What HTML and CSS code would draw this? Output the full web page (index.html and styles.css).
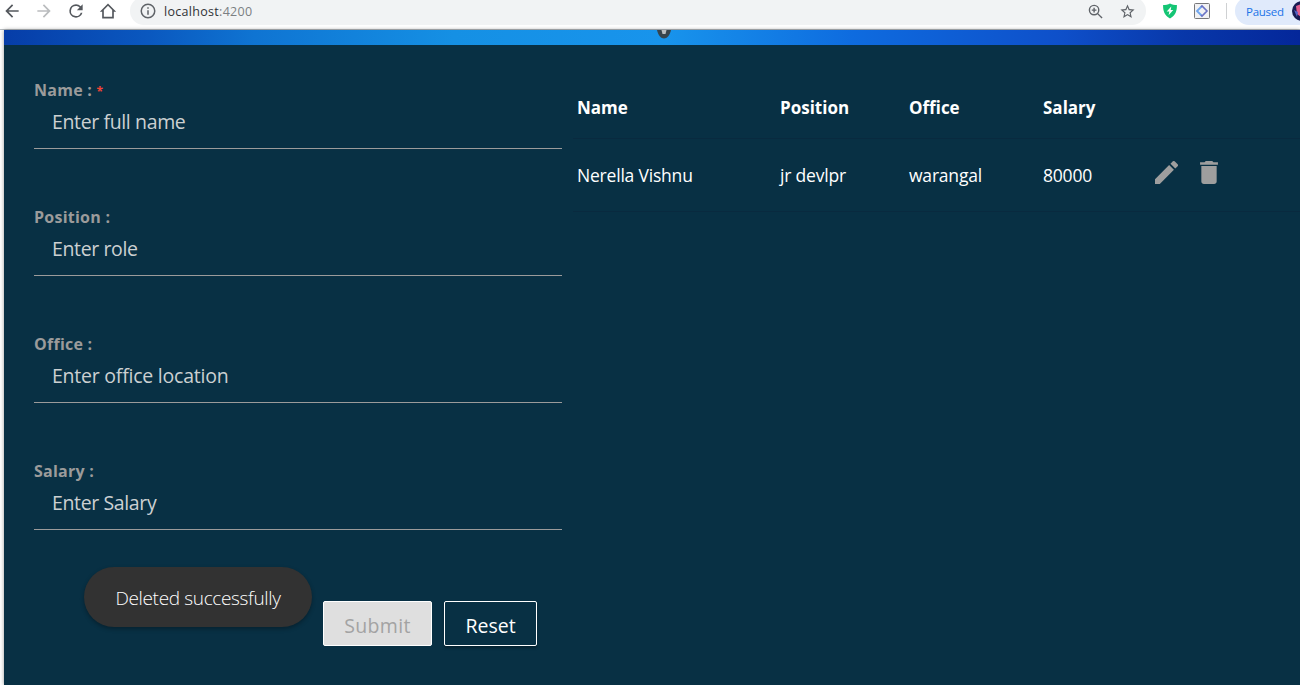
FILE: index.html
```html
<!DOCTYPE html>
<html lang="en">
<head>
<meta charset="utf-8">
<title>Employees</title>
<link rel="stylesheet" href="styles.css">
</head>
<body>
<header class="toolbar">
  <nav class="nav">
    <svg class="icon" viewBox="0 0 24 24"><path d="M20 11H7.83l5.59-5.59L12 4l-8 8 8 8 1.41-1.41L7.83 13H20z"/></svg>
    <svg class="icon icon-off" viewBox="0 0 24 24"><path d="M12 4l-1.41 1.41L16.17 11H4v2h12.17l-5.58 5.59L12 20l8-8z"/></svg>
    <svg class="icon" viewBox="0 0 24 24"><path d="M17.65 6.35A7.96 7.96 0 0 0 12 4a8 8 0 1 0 7.73 10h-2.08A6 6 0 1 1 12 6c1.66 0 3.14.69 4.22 1.78L13 11h7V4z"/></svg>
    <svg class="icon" viewBox="0 0 24 24"><path d="M12 3L2.200 13H5v8h14v-8h2.800zM7 19v-8.200l5-5 5 5V19z" fill-rule="evenodd"/></svg>
  </nav>
  <div class="address">
    <svg class="info" viewBox="0 0 24 24"><path d="M11 17h2v-6h-2zm1-15a10 10 0 1 0 0 20 10 10 0 0 0 0-20zm0 18a8 8 0 1 1 0-16 8 8 0 0 1 0 16zM11 9h2V7h-2z"/></svg>
    <span class="host">localhost</span><span class="port">:4200</span>
    <svg class="magnify" viewBox="0 0 16 16"><g fill="none" stroke="#5f6368" stroke-width="1.500"><circle cx="6.500" cy="6.500" r="5"/><path d="M10 10l5 5M4 6.500h5M6.500 4v5"/></g></svg>
    <svg class="star" viewBox="0 0 24 24"><path d="M22 9.240l-7.190-.62L12 2 9.190 8.630 2 9.240l5.460 4.730L5.820 21 12 17.270 18.180 21l-1.630-7.030zM12 15.400l-3.760 2.270 1-4.280-3.320-2.880 4.380-.38L12 6.100l1.710 4.040 4.380.38-3.320 2.880 1 4.280z"/></svg>
  </div>
  <svg class="shield" viewBox="0 0 16 16"><path d="M8 .4C10 1.600 12.500 2 14.900 2c.2 6-1.500 10.500-6.900 13.600C2.600 12.500.9 8 1.100 2 3.500 2 6 1.600 8 .4z" fill="#14c574"/><path d="M9.300 3.500L4.700 8.600h2.600l-.7 3.700 4.700-5.200H8.700z" fill="#fff"/></svg>
  <svg class="extension" viewBox="0 0 16 16"><rect x=".5" y=".5" width="15" height="15" rx="1" fill="#f1f1f3" stroke="#77777a"/><path d="M8 3L3 8l5 5" fill="none" stroke="#6fa5ee" stroke-width="1.800"/><path d="M7 4l1-1 5 5-5 5-1-1" fill="none" stroke="#6b72c4" stroke-width="1.600"/></svg>
  <span class="divider"></span>
  <div class="profile"><span>Paused</span>
    <svg class="avatar" viewBox="0 0 20 20"><circle cx="10" cy="10" r="10" fill="#171b53"/><path d="M4 5l5-2v13l-4-3z" fill="#e05c8c"/><path d="M2 9l4 2-1 5z" fill="#5262c4"/></svg>
  </div>
</header>
<main class="page">
  <div class="banner">
    <svg class="mark" viewBox="0 0 16 10"><path d="M1 0h14c-1 5-4 8.500-7 8.500S2 5 1 0z" fill="#37444d"/><path d="M5.500 0h5L9.500 4h-3z" fill="#b9bdc0"/></svg>
  </div>
  <div class="content">
    <form class="form">
      <div class="field"><label class="label">Name : <span class="required">*</span></label><input class="input" placeholder="Enter full name"></div>
      <div class="field"><label class="label">Position :</label><input class="input" placeholder="Enter role"></div>
      <div class="field"><label class="label">Office :</label><input class="input office" placeholder="Enter office location"></div>
      <div class="field"><label class="label">Salary :</label><input class="input" placeholder="Enter Salary"></div>
      <div class="actions">
        <button class="button submit" type="button" disabled>Submit</button>
        <button class="button reset" type="button">Reset</button>
      </div>
    </form>
    <section class="table">
      <div class="row head"><span>Name</span><span>Position</span><span>Office</span><span>Salary</span></div>
      <div class="row"><span>Nerella Vishnu</span><span>jr devlpr</span><span>warangal</span><span>80000</span>
        <div class="tools">
          <svg viewBox="3 3 18 18" class="pencil"><path d="M3 17.250V21h3.750L17.810 9.940l-3.750-3.750zM20.710 7.040a1 1 0 0 0 0-1.410l-2.340-2.340a1 1 0 0 0-1.410 0l-1.830 1.830 3.750 3.750z"/></svg>
          <svg viewBox="5 3 14 18" class="trash"><path d="M6 19c0 1.100.9 2 2 2h8c1.100 0 2-.9 2-2V7H6zM19 4h-3.500l-1-1h-5l-1 1H5v2h14z"/></svg>
        </div>
      </div>
    </section>
  </div>
  <div class="toast">Deleted successfully</div>
</main>
</body>
</html>
```
FILE: styles.css
```css
* { box-sizing: border-box; }
body { margin: 0; width: 1300px; height: 685px; overflow: hidden; background: #fff; font-family: "Open Sans", "Noto Sans", sans-serif; }
.toolbar { height: 30px; display: flex; align-items: flex-start; background: #fff; border-bottom: 1px solid #b8bdc0; overflow: hidden; }
.toolbar svg { flex: none; }
.nav { display: flex; flex: none; gap: 12px; width: 130px; padding: 1px 0 0 2px; }
.icon { width: 20px; height: 20px; fill: #54585d; }
.icon-off { fill: #babcbe; }
.address { display: flex; flex: none; align-items: center; width: 1016px; height: 28px; margin-top: -3px; padding: 0 10px 0 9px; border-radius: 14px; background: #f1f3f4; font-size: 12.500px; letter-spacing: .3px; }
.info { width: 18px; height: 18px; margin-right: 7px; fill: #5f6368; }
.host { color: #303236; }
.port { color: #7b7f83; }
.magnify { width: 15px; height: 15px; margin-left: auto; margin-right: 16px; }
.star { width: 17px; height: 17px; fill: #5f6368; }
.shield { width: 16px; height: 16px; margin: 3px 0 0 16px; }
.extension { width: 16px; height: 16px; margin: 3px 0 0 16px; }
.divider { flex: none; width: 1px; height: 16px; margin: 3px 8px 0 16px; background: #cfd1d3; }
.profile { display: flex; align-items: center; flex: none; width: 80px; height: 28px; margin-top: -3px; padding-left: 11px; border-radius: 14px 0 0 14px; background: #e0eafb; color: #1a73e8; font-size: 11.500px; letter-spacing: -.25px; }
.profile span { flex: none; width: 46px; }
.avatar { width: 20px; height: 20px; }
.page { height: 655px; margin-left: 4px; background: #083044; box-shadow: 0 0 4px rgba(0,0,0,.4); }
.banner { height: 15px; display: flex; padding-left: 652px; background: linear-gradient(90deg, #063da8 0, #0a58bf 145px, #0f74d2 250px, #1590e4 450px, #1894ec 660px, #0e6bdf 850px, #0e4fc9 1060px, #0837a9 1180px, #04279a 1296px); }
.mark { width: 16px; height: 10px; }
.content { display: flex; gap: 11px; padding-left: 30px; }
.form { width: 528px; padding-top: 34px; }
.field { display: flex; flex-direction: column; height: 127px; }
.label { height: 22px; line-height: 22px; font-size: 16px; font-weight: 700; letter-spacing: .25px; color: #9b9b9b; white-space: pre; }
.required { color: #f44336; font-size: 12px; }
.input { height: 48px; padding: 0 18px 7px; border: 0; border-bottom: 1px solid #9b9b9b; background: transparent; font: 19.500px "Open Sans", "Noto Sans", sans-serif; letter-spacing: -.37px; outline: 0; color: #fff; }
.input::placeholder { color: #ccd0d2; opacity: 1; }
.office { letter-spacing: -.23px; }
.actions { display: flex; gap: 12px; margin-top: 14px; padding-left: 289px; }
.button { height: 45px; padding: 4px 0 0; border: 1px solid #fff; border-radius: 2px; font: 19.500px "Open Sans", "Noto Sans", sans-serif; }
.submit { width: 109px; background: #dfdfdf; color: #a3a3a3; letter-spacing: .3px; }
.reset { width: 93px; background: transparent; color: #fff; box-shadow: 0 2px 3px rgba(0,0,0,.3); }
.table { flex: 1; padding-top: 20px; }
.row { display: grid; grid-template-columns: 203px 129px 134px 112px 1fr; align-items: center; height: 73px; padding: 0 0 0 4px; border-bottom: 1px solid #092a3f; font-size: 17.500px; letter-spacing: -.2px; color: #fff; }
.head { height: 74px; padding-top: 12px; font-weight: 700; font-size: 17px; letter-spacing: 0; }
.tools { display: flex; align-items: center; gap: 22px; margin-top: -6px; fill: #9e9e9e; }
.pencil { width: 23px; height: 23px; }
.trash { width: 18px; height: 23px; }
.toast { position: absolute; left: 84px; top: 567px; width: 228px; height: 60px; padding-top: 1px; border-radius: 30px; background: #323232; color: #fff; text-align: center; font-size: 19px; font-weight: 300; line-height: 60px; letter-spacing: -.35px; box-shadow: 0 2px 4px rgba(0,0,0,.3); }
```
